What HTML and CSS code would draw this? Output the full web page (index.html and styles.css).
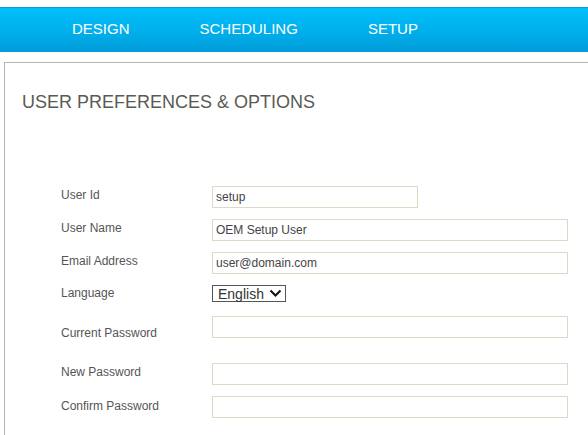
FILE: index.html
```html
<!DOCTYPE html>
<html lang="en">
<head>
  <meta charset="UTF-8" />
  <title>User Preferences &amp; Options</title>
  <meta name="viewport" content="width=device-width, initial-scale=1.0" />
  <link rel="stylesheet" href="styles.css">
</head>
<body>

  <nav class="menu">
    <a href="#" class="menu-item">DESIGN</a>
    <a href="#" class="menu-item">SCHEDULING</a>
    <a href="#" class="menu-item">SETUP</a>
  </nav>

  <div class="panel">
    <h1>USER PREFERENCES &amp; OPTIONS</h1>

    <div class="prefs">
      <div class="row">
        <label for="userId">User Id</label>
        <input type="text" id="userId" class="short" value="setup">
      </div>
      <div class="row">
        <label for="userName">User Name</label>
        <input type="text" id="userName" value="OEM Setup User">
      </div>
      <div class="row">
        <label for="email">Email Address</label>
        <input type="text" id="email" value="user@domain.com">
      </div>
      <div class="row row-lang">
        <label for="language">Language</label>
        <div class="select">
          <span>English</span>
          <svg width="13" height="9" viewBox="0 0 13 9"><path d="M1.5 1.5 L6.5 6.5 L11.5 1.5" fill="none" stroke="#111" stroke-width="2"/></svg>
        </div>
      </div>
      <div class="row row-current">
        <label for="currentPw">Current Password</label>
        <input type="password" id="currentPw">
      </div>
      <div class="row row-new">
        <label for="newPw">New Password</label>
        <input type="password" id="newPw">
      </div>
      <div class="row row-confirm">
        <label for="confirmPw">Confirm Password</label>
        <input type="password" id="confirmPw">
      </div>
    </div>
  </div>

</body>
</html>
```

FILE: styles.css
```css
:root {
  --azul-topo: #00c0fb;
  --azul-base: #009cd9;
  --borda-campo: #dcd9c6;
  --texto: #555;
}

body {
  font-family: "Liberation Sans", Arial, sans-serif;
  margin: 0;
  padding-top: 7px;
  background: #fff;
  color: var(--texto);
  overflow: hidden;
}

.menu {
  display: flex;
  height: 45px;
  align-items: center;
  padding-left: 72px;
  padding-bottom: 4px;
  background: linear-gradient(var(--azul-topo), #00b0ec 50%, var(--azul-base));
  border-top: 1px solid #0aa0d6;
  box-sizing: border-box;
}

.menu-item {
  color: #fff;
  text-decoration: none;
  font-size: 15px;
  margin-right: 70px;
}

.panel {
  margin: 10px 0 0 4px;
  border: 1px solid #b4b4b4;
  border-right: none;
  height: 400px;
}

h1 {
  margin: 29px 0 0 17px;
  font-size: 18px;
  font-weight: normal;
  color: #5a5a55;
}

.prefs {
  margin-top: 73px;
  padding-left: 56px;
}

.row {
  display: flex;
  align-items: center;
  height: 22px;
  margin-bottom: 11px;
}

.row label {
  width: 151px;
  font-size: 12px;
  margin-top: -4px;
}

.row input {
  width: 356px;
  height: 22px;
  box-sizing: border-box;
  border: 1px solid var(--borda-campo);
  padding: 0 3px;
  font-family: inherit;
  font-size: 12px;
  color: #444;
  outline: none;
}

.row input.short {
  width: 206px;
}

.row-lang {
  height: 17px;
  margin-top: 2px;
  margin-bottom: 14px;
}

.row-lang label {
  margin-top: -2px;
}

.select {
  display: flex;
  align-items: center;
  gap: 5px;
  height: 17px;
  box-sizing: border-box;
  padding: 0 3px 0 5px;
  border: 1px solid #555;
  font-size: 14px;
  color: #333;
}

.row-current label {
  margin-top: 12px;
}

.row-current {
  margin-bottom: 25px;
}

.row-new label {
  margin-top: -4px;
}

.row-confirm label {
  margin-top: -2px;
}
```
